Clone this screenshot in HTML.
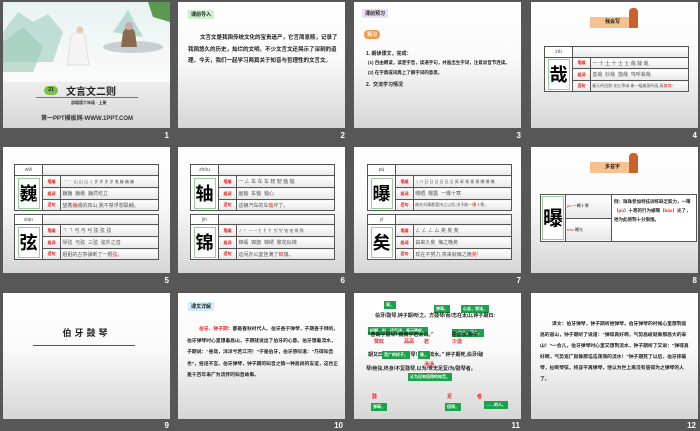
<!DOCTYPE html><html><head><meta charset="utf-8"><style>
*{margin:0;padding:0;box-sizing:border-box}
body{width:700px;height:431px;background:#575757;position:relative;overflow:hidden;font-family:"Liberation Sans","Noto Sans CJK SC",sans-serif}
.s{position:absolute;width:167px;height:126px;background:linear-gradient(#fff,#fafafa 45%,#d6d6d6);overflow:hidden}
.n{position:absolute;color:#fff;font-size:8px;font-weight:bold;text-align:right;width:30px}
.a{position:absolute;white-space:nowrap}
.t{position:absolute;font-size:5.5px;font-weight:bold;color:#222;line-height:11.5px}
table{position:absolute;border-collapse:collapse;background:#fff}
td{border:1px solid #555;padding:0;font-size:5px;color:#555;white-space:nowrap;overflow:hidden;background:linear-gradient(#fff,#e8e8e8)}
td.l{color:#e00;font-weight:bold;font-size:4px;text-align:center}
td.c{text-align:center;vertical-align:middle;background:#fff}
.bx{margin:1px auto;border:1px solid #9c9;width:22px;height:31px;font-size:18px;font-weight:bold;color:#000;line-height:31px;text-align:center;background:#fff}
.r{color:#e22}
.tag{position:absolute;font-size:5px;font-weight:bold;padding:1px 3px}
.g{position:absolute;background:#1aa34a;color:#fff;font-size:4px;font-weight:bold;padding:1px 2px}
.rd{position:absolute;color:#e22;font-size:5px;font-weight:bold}
</style></head><body>

<!-- slide 1 -->
<div class="s" style="left:3px;top:2px">
 <div style="position:absolute;left:0;top:0;width:167px;height:80px;background:linear-gradient(#e6f2f2,#f4f8f6 60%,#fafafa)"></div>
 <svg style="position:absolute;left:0;top:0" width="167" height="80">
  <path d="M0 30 L15 10 L30 20 L45 12 L60 30 L50 60 L0 60Z" fill="#a9d3c8" opacity=".7"/>
  <path d="M0 40 L20 25 L40 45 L30 70 L0 70Z" fill="#9cc9b8" opacity=".6"/>
  <path d="M110 30 L125 8 L140 35Z" fill="#b7dbd2"/>
  <path d="M145 0 L167 0 L167 20 L150 15Z" fill="#5a9a50"/>
  <ellipse cx="130" cy="45" rx="30" ry="6" fill="#c9ced1"/>
  <path d="M120 30 q6 -10 12 0 l2 15 h-16z" fill="#8b6b4f"/>
  <circle cx="126" cy="24" r="4" fill="#caa"/>
  <path d="M68 35 q8 -12 14 0 l4 28 h-22z" fill="#f4f4f4" stroke="#ccc" stroke-width=".5"/>
  <circle cx="77" cy="28" r="3.5" fill="#dcb"/>
 </svg>
 <div class="a" style="left:41px;top:84px;width:14px;height:9px;border-radius:5px;background:#7bc043;color:#222;font-size:5px;font-weight:bold;text-align:center;line-height:9px">21</div>
 <div class="a" style="left:63px;top:81px;font-size:10px;font-weight:bold;color:#222">文言文二则</div>
 <div class="a" style="left:33px;top:95px;width:102px;height:1px;background:#777"></div>
 <div class="a" style="left:68px;top:98px;font-size:4px;color:#333;font-weight:bold">部编版六年级 · 上册</div>
 <div class="a" style="left:38px;top:111px;font-size:6px;font-weight:bold;color:#333">第一PPT模板网-WWW.1PPT.COM</div>
</div>
<div class="n" style="left:139px;top:131px">1</div>

<!-- slide 2 -->
<div class="s" style="left:178px;top:2px">
 <div class="tag" style="left:10px;top:8px;background:#cfeecf;color:#222">课前导入</div>
 <div class="t" style="left:10px;top:31px;width:150px;text-indent:12px">文言文是我国传统文化的宝贵遗产，它言简意赅，记录了我国悠久的历史，灿烂的文明。不少文言文还揭示了深刻的道理。今天，我们一起学习两篇关于知音与哲理性的文言文。</div>
</div>
<div class="n" style="left:315px;top:131px">2</div>

<!-- slide 3 -->
<div class="s" style="left:354px;top:2px">
 <div class="tag" style="left:8px;top:7px;background:#eadff5;color:#222">课前预习</div>
 <div class="tag" style="left:10px;top:28px;background:#f39a4a;color:#fff;border-radius:4px">预习</div>
 <div class="a" style="left:12px;top:48px;font-size:5px;font-weight:bold;color:#222">1. 朗读课文，完成：</div>
 <div class="a" style="left:14px;top:58px;font-size:4.5px;font-weight:bold;color:#222">(1) 自由朗读，读准字音，读通字句，并画出生字词，注意双音节连读。</div>
 <div class="a" style="left:14px;top:68px;font-size:4.5px;font-weight:bold;color:#222">(2) 在字典或词典上了解字词的意思。</div>
 <div class="a" style="left:12px;top:79px;font-size:5px;font-weight:bold;color:#222">2.&nbsp; 交流学习情况</div>
</div>
<div class="n" style="left:491px;top:131px">3</div>

<!-- slide 4 -->
<div class="s" style="left:531px;top:2px">
 <div class="a" style="left:59px;top:15px;width:45px;height:11px;background:#f7c08f;font-size:5px;font-weight:bold;color:#222;text-align:center;line-height:11px">我会写</div>
 <div class="a" style="left:98px;top:6px;width:9px;height:20px;background:#c9622a;border-radius:4px 4px 1px 1px"></div>
 <table style="left:13px;top:44px;width:145px">
  <tr style="height:11px"><td class="c" style="width:28px;font-size:5px">zāi</td><td colspan="2"></td></tr>
  <tr style="height:11px"><td class="c" rowspan="3"><div class="bx">哉</div></td><td class="l" style="width:18px">笔顺</td><td>&nbsp;一 十 土 十 士 士 哉 哉 哉</td></tr>
  <tr style="height:12px"><td class="l">组词</td><td>&nbsp;善哉 &nbsp;妙哉 &nbsp;悠哉 &nbsp;呜呼哀哉</td></tr>
  <tr style="height:11px"><td class="l">造句</td><td style="font-size:4px">&nbsp;春天的田野,花红草绿,像一幅美丽的画,真<span class="r">美哉</span>!</td></tr>
 </table>
</div>
<div class="n" style="left:667px;top:131px">4</div>

<!-- slide 5 -->
<div class="s" style="left:3px;top:147px">
 <table style="left:11px;top:17px;width:145px">
  <tr style="height:11px"><td class="c" style="width:28px">wēi</td><td colspan="2"></td></tr>
  <tr style="height:12px"><td class="c" rowspan="3"><div class="bx">巍</div></td><td class="l" style="width:18px">笔顺</td><td style="font-size:4px">&nbsp;' '' '' '' ' 山 山 山 ⺦ 岁 岁 岁 岁 ⻤ 巍 巍 巍</td></tr>
  <tr style="height:12px"><td class="l">组词</td><td>&nbsp;巍巍 &nbsp;巍峨 &nbsp;巍然屹立</td></tr>
  <tr style="height:11px"><td class="l">造句</td><td>&nbsp;望着<span class="r">巍</span>峨的高山,我不禁浮想联翩。</td></tr>
 </table>
 <table style="left:11px;top:67px;width:145px">
  <tr style="height:10px"><td class="c" style="width:28px">xián</td><td colspan="2"></td></tr>
  <tr style="height:12px"><td class="c" rowspan="3"><div class="bx">弦</div></td><td class="l" style="width:18px">笔顺</td><td>&nbsp;ㄱ ㄱ 弓 弓 弓 弦 弦 弦</td></tr>
  <tr style="height:12px"><td class="l">组词</td><td>&nbsp;琴弦 &nbsp;弓弦 &nbsp;三弦 &nbsp;弦外之音</td></tr>
  <tr style="height:11px"><td class="l">造句</td><td>&nbsp;姐姐的古筝弹断了一根<span class="r">弦</span>。</td></tr>
 </table>
</div>
<div class="n" style="left:139px;top:276px">5</div>

<!-- slide 6 -->
<div class="s" style="left:178px;top:147px">
 <table style="left:12px;top:17px;width:145px">
  <tr style="height:11px"><td class="c" style="width:28px">zhóu</td><td colspan="2"></td></tr>
  <tr style="height:12px"><td class="c" rowspan="3"><div class="bx">轴</div></td><td class="l" style="width:18px">笔顺</td><td>&nbsp;一 𠃋 车 车 车 轫 轫 轴 轴</td></tr>
  <tr style="height:12px"><td class="l">组词</td><td>&nbsp;画轴 &nbsp;车轴 &nbsp;轴心</td></tr>
  <tr style="height:11px"><td class="l">造句</td><td>&nbsp;这辆汽车的车<span class="r">轴</span>坏了。</td></tr>
 </table>
 <table style="left:12px;top:67px;width:145px">
  <tr style="height:10px"><td class="c" style="width:28px">jǐn</td><td colspan="2"></td></tr>
  <tr style="height:12px"><td class="c" rowspan="3"><div class="bx">锦</div></td><td class="l" style="width:18px">笔顺</td><td style="font-size:4px">&nbsp;ノ ㇒ ㇐ ㇐ 钅 钅 钅 钌 钌 铂 铂 锦 锦</td></tr>
  <tr style="height:12px"><td class="l">组词</td><td>&nbsp;锦缎 &nbsp;锦旗 &nbsp;锦绣 &nbsp;繁花似锦</td></tr>
  <tr style="height:11px"><td class="l">造句</td><td>&nbsp;这间办公室挂满了<span class="r">锦</span>旗。</td></tr>
 </table>
</div>
<div class="n" style="left:315px;top:276px">6</div>

<!-- slide 7 -->
<div class="s" style="left:354px;top:147px">
 <table style="left:13px;top:17px;width:145px">
  <tr style="height:11px"><td class="c" style="width:28px">pù</td><td colspan="2"></td></tr>
  <tr style="height:12px"><td class="c" rowspan="3"><div class="bx">曝</div></td><td class="l" style="width:18px">笔顺</td><td style="font-size:4px">&nbsp;丨 П 日 日 日 日 旦 旦 昇 昇 㬥 㬥 㬥 曝 曝 曝</td></tr>
  <tr style="height:12px"><td class="l">组词</td><td>&nbsp;曝晒 &nbsp;曝露 &nbsp;一曝十寒</td></tr>
  <tr style="height:11px"><td class="l">造句</td><td style="font-size:4px">&nbsp;做任何事都要持之以恒,决不能一<span class="r">曝</span>十寒。</td></tr>
 </table>
 <table style="left:13px;top:67px;width:145px">
  <tr style="height:10px"><td class="c" style="width:28px">yǐ</td><td colspan="2"></td></tr>
  <tr style="height:12px"><td class="c" rowspan="3"><div class="bx">矣</div></td><td class="l" style="width:18px">笔顺</td><td>&nbsp;ㄥ ㄥ ㄥ 厶 矣 矣 矣</td></tr>
  <tr style="height:12px"><td class="l">组词</td><td>&nbsp;由来久矣 &nbsp;悔之晚矣</td></tr>
  <tr style="height:11px"><td class="l">造句</td><td>&nbsp;现在不努力,将来就悔之晚<span class="r">矣</span>!</td></tr>
 </table>
</div>
<div class="n" style="left:491px;top:276px">7</div>

<!-- slide 8 -->
<div class="s" style="left:531px;top:147px">
 <div class="a" style="left:59px;top:15px;width:45px;height:11px;background:#f7c08f;font-size:5px;font-weight:bold;color:#222;text-align:center;line-height:11px">多音字</div>
 <div class="a" style="left:98px;top:6px;width:9px;height:20px;background:#c9622a;border-radius:4px 4px 1px 1px"></div>
 <table style="left:9px;top:47px;width:157px">
  <tr style="height:23px"><td class="c" rowspan="2" style="width:25px"><div class="bx" style="width:22px;height:44px;line-height:44px;font-size:20px">曝</div></td><td style="width:46px;font-size:4px;color:#222">&nbsp;<span class="r">pù</span> 一曝十寒</td><td rowspan="2" style="white-space:normal;font-size:4.5px;font-weight:bold;color:#222;line-height:9px;padding:2px;vertical-align:top;background:#fff">例：珠珠参加特技训练缺乏毅力，一曝（<span class="r">pù</span>）十寒的行为被曝（<span class="r">bào</span>）光了，他为此感到十分惭愧。</td></tr>
  <tr style="height:23px"><td style="font-size:4px;color:#222">&nbsp;<span class="r">bào</span> 曝光</td></tr>
 </table>
</div>
<div class="n" style="left:667px;top:276px">8</div>

<!-- slide 9 -->
<div class="s" style="left:3px;top:293px">
 <div class="a" style="left:0;width:167px;text-align:center;top:33px;font-size:9px;font-weight:bold;color:#222;letter-spacing:3px">伯牙鼓琴</div>
 <div class="a" style="left:30px;top:52px;width:102px;height:1px;background:#555"></div>
</div>
<div class="n" style="left:139px;top:421px">9</div>

<!-- slide 10 -->
<div class="s" style="left:178px;top:293px">
 <div class="tag" style="left:10px;top:9px;background:#d2eef8;color:#222">课文详解</div>
 <div class="t" style="left:9px;top:31px;width:152px;text-indent:12px;font-size:4.8px;line-height:11.6px"><span class="r">伯牙、钟子期</span>：都是春秋时代人。伯牙善于弹琴，子期善于倾听。伯牙弹琴时心里想着高山，子期就说出了伯牙的心意。伯牙想着流水，子期说：“善哉，洋洋兮若江河！”于是伯牙，伯牙感叹道：“乃得知音也”，俗话不言。伯牙弹琴，钟子期的知音之情一种高尚的友谊，这也正是千百年来广为流传的知音故事。</div>
</div>
<div class="n" style="left:313px;top:421px">10</div>

<!-- slide 11 -->
<div class="s" style="left:354px;top:293px">
 <div class="g" style="left:30px;top:8px">琴。</div>
 <div class="g" style="left:80px;top:12px">弹琴。</div>
 <div class="g" style="left:107px;top:12px">心志，想法。</div>
 <div class="a" style="left:21px;top:19px;font-size:5px;font-weight:bold;color:#222">伯牙/鼓琴,钟子期/听之。方鼓琴/而/志在太山,钟子期曰:</div>
 <div class="g" style="left:14px;top:34px;font-size:4px">好啊。形，语气词，表示赞叹。</div>
 <div class="g" style="left:98px;top:36px">一会儿，不久。</div>
 <div class="a" style="left:14px;top:38px;font-size:5px;font-weight:bold;color:#222">“善哉乎鼓琴! 巍巍乎若太山。” &nbsp; &nbsp; &nbsp; &nbsp; &nbsp; &nbsp; 在流水,钟子</div>
 <div class="rd" style="left:20px;top:45px">赞叹</div><div class="rd" style="left:50px;top:45px">高高</div><div class="rd" style="left:70px;top:45px">若</div><div class="rd" style="left:98px;top:45px">少选</div>
 <div class="a" style="left:14px;top:58px;font-size:5px;font-weight:bold;color:#222">期又曰: &nbsp; &nbsp; &nbsp; &nbsp; &nbsp; &nbsp; &nbsp; 鼓琴! &nbsp; &nbsp; 若流水。” 钟子期死,伯牙/破</div>
 <div class="g" style="left:28px;top:58px">宽广的样子。</div>
 <div class="g" style="left:64px;top:58px">像，</div>
 <div class="rd" style="left:70px;top:68px">汤汤</div>
 <div class="a" style="left:12px;top:72px;font-size:5px;font-weight:bold;color:#222">琴/绝弦,终身/不复鼓琴,以为/世无足复/为/鼓琴者。</div>
 <div class="g" style="left:54px;top:80px">认为没有值得的知音。</div>
 <div class="rd" style="left:18px;top:100px">鼓</div><div class="rd" style="left:93px;top:100px">足</div><div class="rd" style="left:123px;top:100px">者</div>
 <div class="g" style="left:17px;top:110px">弹琴。</div>
 <div class="g" style="left:91px;top:110px">值得。</div>
 <div class="g" style="left:130px;top:108px">……的人。</div>
</div>
<div class="n" style="left:490px;top:421px">11</div>

<!-- slide 12 -->
<div class="s" style="left:531px;top:293px">
 <div class="t" style="left:9px;top:26px;width:151px;text-indent:12px;font-size:4.8px;line-height:11px">译文：伯牙弹琴，钟子期听他弹琴。伯牙弹琴的时候心里想到高高的高山，钟子期听了说道：“弹得真好啊，气势高峻就像那高大的泰山！”一会儿，伯牙弹琴时心里又想到流水，钟子期听了又说：“弹得真好啊，气势宽广就像那浩浩荡荡的流水！”钟子期死了以后，伯牙摔破琴，扯断琴弦，终身不再弹琴，他认为世上再没有值得为之弹琴的人了。</div>
</div>
<div class="n" style="left:666px;top:421px">12</div>

</body></html>
